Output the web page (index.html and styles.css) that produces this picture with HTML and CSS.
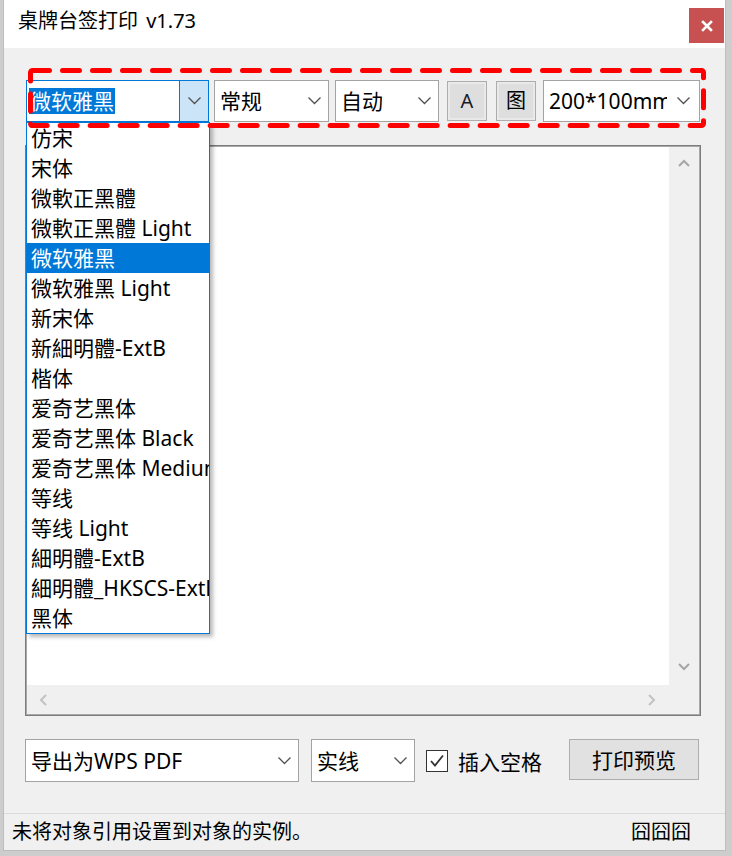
FILE: index.html
```html
<!DOCTYPE html>
<html lang="zh-CN">
<head>
<meta charset="utf-8">
<title>桌牌台签打印 v1.73</title>
<link rel="stylesheet" href="styles.css">
</head>
<body>
<div class="window">
  <header class="titlebar">
    <span class="title">桌牌台签打印 v1.73</span>
    <button class="close" aria-label="关闭">
      <svg width="12" height="12" viewBox="0 0 12 12"><path d="M2 2 L10 10 M10 2 L2 10" stroke="#fff" stroke-width="2.6" stroke-linecap="square"/></svg>
    </button>
  </header>

  <main class="client">
    <div class="toolbar">
      <div class="combo combo-font focused">
        <span class="value"><span class="sel">微软雅黑</span></span>
        <span class="drop drop-active"><svg width="13" height="8" viewBox="0 0 13 8"><polyline points="0.5,0.5 6.5,6.5 12.5,0.5" fill="none" stroke="#505050" stroke-width="1.3"/></svg></span>
      </div>
      <div class="combo combo-style">
        <span class="value">常规</span>
        <span class="drop"><svg width="13" height="8" viewBox="0 0 13 8"><polyline points="0.5,0.5 6.5,6.5 12.5,0.5" fill="none" stroke="#505050" stroke-width="1.3"/></svg></span>
      </div>
      <div class="combo combo-auto">
        <span class="value">自动</span>
        <span class="drop"><svg width="13" height="8" viewBox="0 0 13 8"><polyline points="0.5,0.5 6.5,6.5 12.5,0.5" fill="none" stroke="#505050" stroke-width="1.3"/></svg></span>
      </div>
      <button class="btn sq btn-a">A</button>
      <button class="btn sq btn-img">图</button>
      <div class="combo combo-paper">
        <span class="value">200*100mm</span>
        <span class="drop"><svg width="13" height="8" viewBox="0 0 13 8"><polyline points="0.5,0.5 6.5,6.5 12.5,0.5" fill="none" stroke="#505050" stroke-width="1.3"/></svg></span>
      </div>
    </div>

    <div class="editor">
      <div class="editor-main">
        <div class="canvas"></div>
        <div class="vscroll">
          <svg width="12" height="8" viewBox="0 0 12 8"><polyline points="1,7 6,2 11,7" fill="none" stroke="#a6a6a6" stroke-width="2"/></svg>
          <svg width="12" height="8" viewBox="0 0 12 8"><polyline points="1,1 6,6 11,1" fill="none" stroke="#a6a6a6" stroke-width="2"/></svg>
        </div>
      </div>
      <div class="hrow">
        <div class="hscroll">
          <svg width="8" height="12" viewBox="0 0 8 12"><polyline points="7,1 2,6 7,11" fill="none" stroke="#c2c2c2" stroke-width="2"/></svg>
          <svg width="8" height="12" viewBox="0 0 8 12"><polyline points="1,1 6,6 1,11" fill="none" stroke="#c2c2c2" stroke-width="2"/></svg>
        </div>
        <div class="corner"></div>
      </div>
    </div>

    <div class="bottombar">
      <div class="combo combo-export">
        <span class="value">导出为WPS PDF</span>
        <span class="drop"><svg width="13" height="8" viewBox="0 0 13 8"><polyline points="0.5,0.5 6.5,6.5 12.5,0.5" fill="none" stroke="#505050" stroke-width="1.3"/></svg></span>
      </div>
      <div class="combo combo-line">
        <span class="value">实线</span>
        <span class="drop"><svg width="13" height="8" viewBox="0 0 13 8"><polyline points="0.5,0.5 6.5,6.5 12.5,0.5" fill="none" stroke="#505050" stroke-width="1.3"/></svg></span>
      </div>
      <label class="check">
        <span class="box"><svg width="20" height="20" viewBox="0 0 20 20"><polyline points="4,10 8,14.5 16,4.5" fill="none" stroke="#333" stroke-width="1.8"/></svg></span>
        <span class="check-text">插入空格</span>
      </label>
      <button class="btn btn-preview">打印预览</button>
    </div>
  </main>

  <footer class="status">
    <span>未将对象引用设置到对象的实例。</span>
    <span class="status-right">囧囧囧</span>
  </footer>

  <ul class="font-list">
    <li>仿宋</li>
    <li>宋体</li>
    <li>微軟正黑體</li>
    <li>微軟正黑體 Light</li>
    <li class="selected">微软雅黑</li>
    <li>微软雅黑 Light</li>
    <li>新宋体</li>
    <li>新細明體-ExtB</li>
    <li>楷体</li>
    <li>爱奇艺黑体</li>
    <li>爱奇艺黑体 Black</li>
    <li>爱奇艺黑体 Medium</li>
    <li>等线</li>
    <li>等线 Light</li>
    <li>細明體-ExtB</li>
    <li>細明體_HKSCS-ExtB</li>
    <li>黑体</li>
  </ul>

  <svg class="mark-frame" width="678" height="60" viewBox="0 0 678 60">
    <rect x="2.5" y="2.5" width="673" height="55" rx="2" fill="none" stroke="#ff0000" stroke-width="5" stroke-dasharray="17 13" stroke-linecap="round"/>
  </svg>
</div>
</body>
</html>
```

FILE: styles.css
```css
html, body {
  margin: 0;
  padding: 0;
}

body {
  background: #cdcdcd;
  font-family: "Noto Sans", "Noto Sans CJK SC", sans-serif;
  color: #000;
  width: 732px;
  height: 856px;
  overflow: hidden;
}

.window {
  position: relative;
  width: 721px;
  height: 850px;
  margin-left: 4px;
  background: #f0f0f0;
  display: flex;
  flex-direction: column;
  box-shadow: 0 0 0 1px #bdbdbd;
}

.titlebar {
  height: 48px;
  background: #fff;
  display: flex;
  align-items: flex-start;
  flex-shrink: 0;
}

.title {
  font-size: 20px;
  line-height: 28px;
  padding: 7px 0 0 14px;
  word-spacing: 3px;
}

.close {
  margin: 8px 1px 0 auto;
  width: 35px;
  height: 35px;
  padding: 0;
  border: 0;
  background: #c75050;
  display: flex;
  align-items: center;
  justify-content: center;
}

.client {
  flex: 1;
  padding: 32px 24px 0 21px;
  display: flex;
  flex-direction: column;
}

.toolbar {
  display: flex;
  align-items: flex-start;
  height: 42px;
}

.combo {
  box-sizing: border-box;
  height: 42px;
  background: #fff;
  border: 1px solid #a3a3a3;
  display: flex;
  align-items: stretch;
  font-size: 21px;
  line-height: 26px;
  overflow: hidden;
}

.combo .value {
  flex: 1;
  min-width: 0;
  padding-left: 5px;
  white-space: nowrap;
  overflow: hidden;
  display: flex;
  align-items: center;
}

.combo .drop {
  width: 28px;
  flex-shrink: 0;
  display: flex;
  align-items: center;
  justify-content: center;
}

.combo-font {
  width: 183px;
  margin-left: 1px;
  border-color: #0078d7;
}

.combo-font .value {
  padding-left: 2px;
}

.sel {
  background: #0078d7;
  color: #fff;
  padding: 0 1px;
  line-height: 26px;
}

.drop-active {
  background: #cce4f7;
  border-left: 1px solid #0078d7;
}

.combo-style {
  width: 115px;
  margin-left: 5px;
}

.combo-auto {
  width: 104px;
  margin-left: 6px;
}

.combo-paper {
  width: 157px;
  margin-left: 7px;
}

.combo-paper .drop {
  width: 32px;
}

.btn {
  box-sizing: border-box;
  font-family: inherit;
  font-size: 21px;
  line-height: 26px;
  color: #000;
  background: #e1e1e1;
  border: 1px solid #adadad;
  padding: 0;
}

.sq {
  width: 40px;
  height: 40px;
  margin-top: 1px;
  box-shadow: inset 0 0 0 2px #e9e9e9;
  background: #dedede;
  font-size: 20px;
}

.btn-a {
  margin-left: 8px;
  color: #1a1a2a;
}

.btn-img {
  margin-left: 9px;
}

.editor {
  box-sizing: border-box;
  margin-top: 23px;
  height: 571px;
  border: 1px solid #7c7c7c;
  padding: 1px;
  box-shadow: inset 0 0 0 1px #a8a8a8;
  background: #f0f0f0;
  display: flex;
  flex-direction: column;
}

.editor-main {
  flex: 1;
  display: flex;
}

.canvas {
  flex: 1;
  background: #fff;
}

.vscroll {
  width: 30px;
  background: #f0f0f0;
  display: flex;
  flex-direction: column;
  align-items: center;
  justify-content: space-between;
  padding: 12px 0 14px;
}

.hrow {
  height: 29px;
  display: flex;
}

.hscroll {
  flex: 1;
  background: #f0f0f0;
  display: flex;
  align-items: center;
  justify-content: space-between;
  padding: 0 13px 0 12px;
}

.corner {
  width: 30px;
  background: #f0f0f0;
}

.bottombar {
  margin-top: 23px;
  display: flex;
  align-items: flex-start;
  height: 43px;
}

.combo-export {
  width: 274px;
  height: 43px;
}

.combo-line {
  width: 104px;
  height: 43px;
  margin-left: 12px;
}

.check {
  display: flex;
  align-items: center;
  height: 43px;
  margin-left: 11px;
  font-size: 21px;
}

.check .box {
  box-sizing: border-box;
  width: 22px;
  height: 22px;
  border: 1px solid #333;
  background: #fff;
  display: flex;
  align-items: center;
  justify-content: center;
}

.check-text {
  margin-left: 10px;
}

.btn-preview {
  width: 130px;
  height: 41px;
  margin-left: auto;
  margin-right: 2px;
}

.status {
  height: 37px;
  box-sizing: border-box;
  border-top: 1px solid #dadada;
  display: flex;
  align-items: center;
  justify-content: space-between;
  padding: 0 34px 0 8px;
  font-size: 20px;
  line-height: 28px;
  flex-shrink: 0;
}

.font-list {
  position: absolute;
  left: 22px;
  top: 122px;
  box-sizing: border-box;
  width: 184px;
  height: 512px;
  margin: 0;
  padding: 0;
  list-style: none;
  background: #fff;
  border: 1px solid #0078d7;
  box-shadow: 3px 3px 4px rgba(0, 0, 0, 0.28);
  font-size: 21px;
}

.font-list li {
  height: 30px;
  line-height: 30px;
  padding-left: 4px;
  white-space: nowrap;
  overflow: hidden;
}

.font-list li.selected {
  background: #0078d7;
  color: #fff;
}

.mark-frame {
  position: absolute;
  left: 24px;
  top: 68px;
}
```
